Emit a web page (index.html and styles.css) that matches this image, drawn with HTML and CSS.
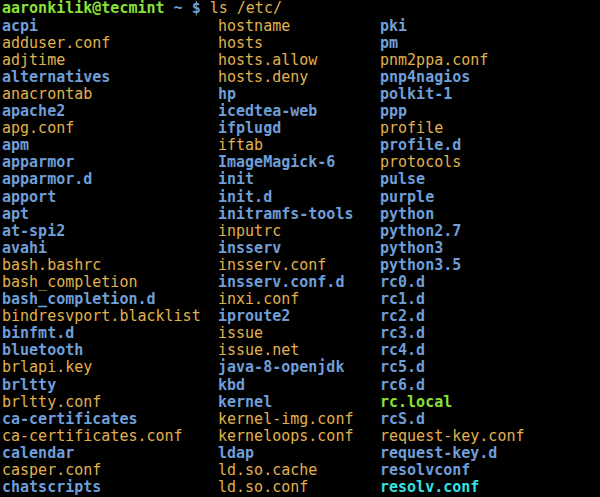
FILE: index.html
```html
<!DOCTYPE html>
<html>
<head>
<meta charset="utf-8">
<link rel="stylesheet" href="styles.css">
</head>
<body>
<div class="term">
  <div class="line"><span class="g b">aaronkilik@tecmint</span> <span class="d">~ $</span> <span class="f">ls /etc/</span></div>
  <div class="listing">
    <span class="d">acpi</span>
    <span class="f">adduser.conf</span>
    <span class="f">adjtime</span>
    <span class="d">alternatives</span>
    <span class="f">anacrontab</span>
    <span class="d">apache2</span>
    <span class="f">apg.conf</span>
    <span class="d">apm</span>
    <span class="d">apparmor</span>
    <span class="d">apparmor.d</span>
    <span class="d">apport</span>
    <span class="d">apt</span>
    <span class="d">at-spi2</span>
    <span class="d">avahi</span>
    <span class="f">bash.bashrc</span>
    <span class="f">bash_completion</span>
    <span class="d">bash_completion.d</span>
    <span class="f">bindresvport.blacklist</span>
    <span class="d">binfmt.d</span>
    <span class="d">bluetooth</span>
    <span class="f">brlapi.key</span>
    <span class="d">brltty</span>
    <span class="f">brltty.conf</span>
    <span class="d">ca-certificates</span>
    <span class="f">ca-certificates.conf</span>
    <span class="d">calendar</span>
    <span class="f">casper.conf</span>
    <span class="d">chatscripts</span>

    <span class="f">hostname</span>
    <span class="f">hosts</span>
    <span class="f">hosts.allow</span>
    <span class="f">hosts.deny</span>
    <span class="d">hp</span>
    <span class="d">icedtea-web</span>
    <span class="d">ifplugd</span>
    <span class="f">iftab</span>
    <span class="d">ImageMagick-6</span>
    <span class="d">init</span>
    <span class="d">init.d</span>
    <span class="d">initramfs-tools</span>
    <span class="f">inputrc</span>
    <span class="d">insserv</span>
    <span class="f">insserv.conf</span>
    <span class="d">insserv.conf.d</span>
    <span class="f">inxi.conf</span>
    <span class="d">iproute2</span>
    <span class="f">issue</span>
    <span class="f">issue.net</span>
    <span class="d">java-8-openjdk</span>
    <span class="d">kbd</span>
    <span class="d">kernel</span>
    <span class="f">kernel-img.conf</span>
    <span class="f">kerneloops.conf</span>
    <span class="d">ldap</span>
    <span class="f">ld.so.cache</span>
    <span class="f">ld.so.conf</span>

    <span class="d">pki</span>
    <span class="d">pm</span>
    <span class="f">pnm2ppa.conf</span>
    <span class="d">pnp4nagios</span>
    <span class="d">polkit-1</span>
    <span class="d">ppp</span>
    <span class="f">profile</span>
    <span class="d">profile.d</span>
    <span class="f">protocols</span>
    <span class="d">pulse</span>
    <span class="d">purple</span>
    <span class="d">python</span>
    <span class="d">python2.7</span>
    <span class="d">python3</span>
    <span class="d">python3.5</span>
    <span class="d">rc0.d</span>
    <span class="d">rc1.d</span>
    <span class="d">rc2.d</span>
    <span class="d">rc3.d</span>
    <span class="d">rc4.d</span>
    <span class="d">rc5.d</span>
    <span class="d">rc6.d</span>
    <span class="g b">rc.local</span>
    <span class="d">rcS.d</span>
    <span class="f">request-key.conf</span>
    <span class="d">request-key.d</span>
    <span class="d">resolvconf</span>
    <span class="c">resolv.conf</span>
  </div>
</div>
</body>
</html>
```
FILE: styles.css
```css
html, body {
  margin: 0;
  padding: 0;
  background: #000;
}
.term {
  font-family: "DejaVu Sans Mono", monospace;
  font-size: 15px;
  line-height: 17px;
  color: #dcb35c;
  padding: 0 0 0 2px;
}
.line {
  height: 17.6px;
  white-space: pre;
}
.listing {
  display: grid;
  grid-template-columns: 216px 162px auto;
  grid-template-rows: repeat(28, 17.1px);
  grid-auto-flow: column;
  white-space: pre;
}
.b { font-weight: bold; }
.g { color: #8ae234; }
.d { color: #6f9ed8; font-weight: bold; }
.f { color: #e0b24e; }
.c { color: #34e2e2; font-weight: bold; }
```
